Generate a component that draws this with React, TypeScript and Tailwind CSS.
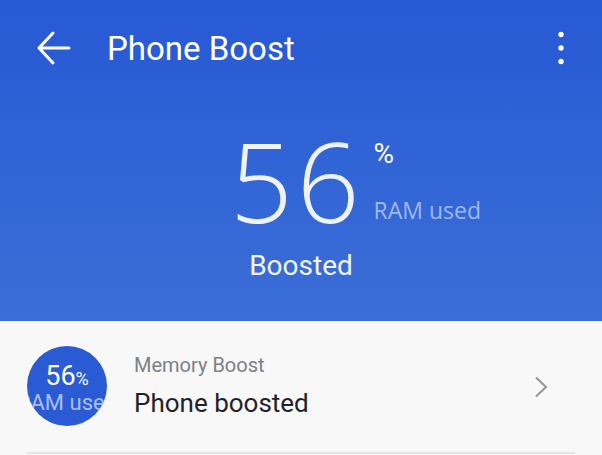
import React from "react"

function BackArrow() {
  return (
    <svg width="36" height="36" viewBox="0 0 36 36" fill="none" stroke="white" strokeWidth="3" strokeLinecap="round" strokeLinejoin="round">
      <path d="M33 18H4M17 3L3 18l14 15" />
    </svg>
  )
}

function MoreDots() {
  return (
    <svg width="8" height="36" viewBox="0 0 8 36" fill="white">
      <circle cx="4" cy="4.5" r="2.7" />
      <circle cx="4" cy="18" r="2.7" />
      <circle cx="4" cy="31.5" r="2.7" />
    </svg>
  )
}

export default function App() {
  return (
    <div className="w-[602px] h-[455px] overflow-hidden bg-[#f8f8f8] font-['Roboto',sans-serif]">
      <div className="h-[321px] bg-gradient-to-b from-[#2659d4] to-[#3c6ed7] flex flex-col">
        <div className="h-[96px] flex items-center pl-[36px] pr-[37px]">
          <BackArrow />
          <h1 className="ml-[35px] text-[33px] text-white leading-none">Phone Boost</h1>
          <div className="ml-auto">
            <MoreDots />
          </div>
        </div>
        <div className="flex items-start pl-[230px] h-[128px]">
          <div className="text-[110px] font-light leading-[0.75] tracking-[4px] text-[#eef2fb] mt-[43px] font-['Open_Sans',sans-serif]">56</div>
          <div className="ml-[10px] flex flex-col">
            <span className="text-[28px] text-white leading-none mt-[44px]">%</span>
            <span className="text-[23px] text-[#9fb8ee] leading-none mt-[31px] font-['Open_Sans',sans-serif]">RAM used</span>
          </div>
        </div>
        <div className="text-center text-[28px] text-[#f2f5fc] leading-none mt-[28px]">Boosted</div>
      </div>
      <div className="flex items-center pl-[27px] pr-[54px] h-[133px]">
        <div className="w-[80px] h-[80px] rounded-full bg-[#2a5bd4] overflow-hidden flex flex-col items-center justify-center shrink-0 -mt-[4px]">
          <div className="text-white leading-none mt-[6px]">
            <span className="text-[27px]">56</span>
            <span className="text-[18px]">%</span>
          </div>
          <div className="text-[22px] text-[#a9bff0] leading-none mt-[2px] whitespace-nowrap">RAM used</div>
        </div>
        <div className="ml-[27px] flex flex-col -mt-[4px]">
          <span className="text-[20px] text-[#7c8087] leading-none">Memory Boost</span>
          <span className="text-[26px] text-[#1f2327] leading-none mt-[15px]">Phone boosted</span>
        </div>
        <svg className="ml-auto -mt-[2px]" width="14" height="22" viewBox="0 0 14 22" fill="none" stroke="#9a9a9a" strokeWidth="2.2">
          <path d="M2 1.5l10 9.5-10 9.5" />
        </svg>
      </div>
      <div className="mx-[27px] h-[2px] bg-[#e4e4e4] -mt-[2px]" />
    </div>
  )
}
